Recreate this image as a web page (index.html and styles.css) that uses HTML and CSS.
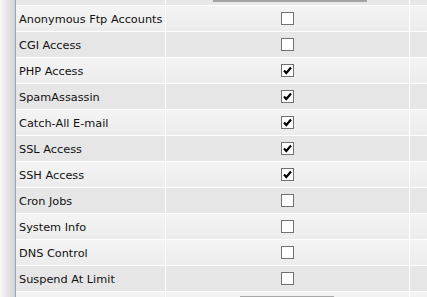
FILE: index.html
```html
<!DOCTYPE html>
<html>
<head>
<meta charset="utf-8">
<link rel="stylesheet" href="styles.css">
</head>
<body>
<div class="page">
  <div class="shadow"></div>
  <div class="table">
    <div class="row dark top"><div class="c1"></div><div class="c2"><span class="topfield"></span></div><div class="c3"></div></div>
    <div class="row light"><div class="c1">Anonymous Ftp Accounts</div><div class="c2"><span class="box"></span></div><div class="c3"></div></div>
    <div class="row dark"><div class="c1">CGI Access</div><div class="c2"><span class="box"></span></div><div class="c3"></div></div>
    <div class="row light"><div class="c1">PHP Access</div><div class="c2"><span class="box"><svg width="11" height="11" viewBox="0 0 11 11"><path d="M2 5.5 L4.3 8 L9 2.5" fill="none" stroke="#000" stroke-width="2.2"/></svg></span></div><div class="c3"></div></div>
    <div class="row dark"><div class="c1">SpamAssassin</div><div class="c2"><span class="box"><svg width="11" height="11" viewBox="0 0 11 11"><path d="M2 5.5 L4.3 8 L9 2.5" fill="none" stroke="#000" stroke-width="2.2"/></svg></span></div><div class="c3"></div></div>
    <div class="row light"><div class="c1">Catch-All E-mail</div><div class="c2"><span class="box"><svg width="11" height="11" viewBox="0 0 11 11"><path d="M2 5.5 L4.3 8 L9 2.5" fill="none" stroke="#000" stroke-width="2.2"/></svg></span></div><div class="c3"></div></div>
    <div class="row dark"><div class="c1">SSL Access</div><div class="c2"><span class="box"><svg width="11" height="11" viewBox="0 0 11 11"><path d="M2 5.5 L4.3 8 L9 2.5" fill="none" stroke="#000" stroke-width="2.2"/></svg></span></div><div class="c3"></div></div>
    <div class="row light"><div class="c1">SSH Access</div><div class="c2"><span class="box"><svg width="11" height="11" viewBox="0 0 11 11"><path d="M2 5.5 L4.3 8 L9 2.5" fill="none" stroke="#000" stroke-width="2.2"/></svg></span></div><div class="c3"></div></div>
    <div class="row dark"><div class="c1">Cron Jobs</div><div class="c2"><span class="box"></span></div><div class="c3"></div></div>
    <div class="row light"><div class="c1">System Info</div><div class="c2"><span class="box"></span></div><div class="c3"></div></div>
    <div class="row light"><div class="c1">DNS Control</div><div class="c2"><span class="box"></span></div><div class="c3"></div></div>
    <div class="row dark"><div class="c1">Suspend At Limit</div><div class="c2"><span class="box"></span></div><div class="c3"></div></div>
    <div class="row light bottom"><div class="c1"></div><div class="c2"><span class="botfield"></span></div><div class="c3"></div></div>
  </div>
</div>
</body>
</html>
```
FILE: styles.css
```css
html, body {
  margin: 0;
  padding: 0;
  background: #ffffff;
}
.page {
  display: flex;
  width: 427px;
  height: 297px;
  overflow: hidden;
  font-family: "DejaVu Sans", Verdana, sans-serif;
  font-size: 11.3px;
  color: #111111;
}
.shadow {
  width: 15px;
  flex: none;
  background: linear-gradient(to right, #f8f8f8, #d4d4d4);
}
.table {
  flex: 1;
  display: flex;
  flex-direction: column;
  gap: 1px;
  border-left: 1px solid #8aa8c6;
  background: #ffffff;
}
.row {
  display: grid;
  grid-template-columns: 149px 243px 1fr;
  column-gap: 1px;
  height: 25px;
  flex: none;
}
.row > div {
  display: flex;
  align-items: center;
}
.row.dark > div {
  background: #e6e6e6;
}
.row.light > div {
  background: linear-gradient(to bottom, #f4f4f4, #ececec);
}
.row.top {
  height: 5px;
}
.row.top > div {
  background: #e8e8e8;
  align-items: flex-start;
}
.row.bottom {
  height: 10px;
}
.row.bottom > div {
  align-items: flex-start;
}
.c1 {
  padding-left: 3px;
  padding-top: 2px;
  white-space: nowrap;
}
.c2 {
  justify-content: center;
}
.row.top .c2, .row.bottom .c2 {
  justify-content: flex-start;
}
.box {
  width: 11px;
  height: 11px;
  border: 1px solid #717171;
  background: #ffffff;
  display: flex;
  align-items: center;
  justify-content: center;
}
.box svg {
  display: block;
}
.topfield {
  display: block;
  margin-left: 47px;
  width: 154px;
  height: 2px;
  background: #a3a3a3;
}
.botfield {
  display: block;
  margin-left: 74px;
  margin-top: 4px;
  width: 92px;
  height: 8px;
  border: 1px solid #a8a8a8;
  background: #ffffff;
}
```
